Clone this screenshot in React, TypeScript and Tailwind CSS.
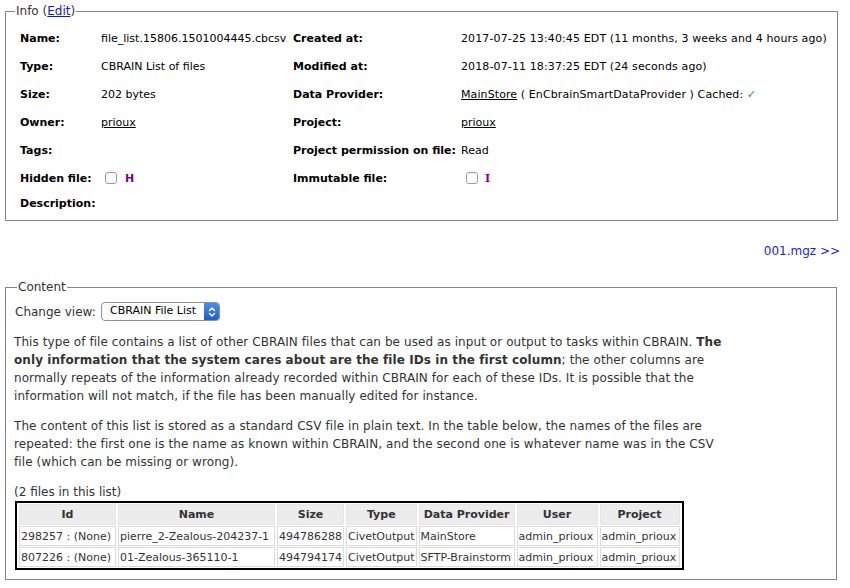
import React from "react";

const Check = () => (
  <span className="inline-block w-[12px] h-[12px] border border-[#9a9a9a] rounded-[3px] bg-white align-middle" />
);

function Row({ children }: { children: React.ReactNode }) {
  return <div className="contents">{children}</div>;
}

const Cell = ({ children, className = "" }: { children?: React.ReactNode; className?: string }) => (
  <div className={`flex items-center whitespace-nowrap ${className}`}>{children}</div>
);

export default function App() {
  const rows = [
    ["298257 : (None)", "pierre_2-Zealous-204237-1", "494786288", "CivetOutput", "MainStore", "admin_prioux", "admin_prioux"],
    ["807226 : (None)", "01-Zealous-365110-1", "494794174", "CivetOutput", "SFTP-Brainstorm", "admin_prioux", "admin_prioux"],
  ];
  const heads = ["Id", "Name", "Size", "Type", "Data Provider", "User", "Project"];
  const widths = ["w-[97px]", "w-[157px]", "w-[66px]", "w-[70px]", "w-[96px]", "w-[81px]", "w-[80px]"];

  return (
    <div className="w-[850px] h-[588px] overflow-hidden bg-white px-[5px] font-['DejaVu_Sans',sans-serif] text-black">
      {/* Info */}
      <fieldset className="mt-[4px] w-[833px] border border-[#858585] pl-[14px] pt-[6px] pb-[6px]">
        <legend className="ml-[-5px] px-[1px] text-[12px] leading-[14px] text-[#333]">
          Info (<span className="text-[#1515d0] underline">Edit</span>)
        </legend>
        <div className="grid grid-cols-[81px_192px_168px_1fr] text-[11px] leading-[13px]">
          <Row>
            <Cell className="h-[28px] font-bold">Name:</Cell>
            <Cell className="h-[28px]">file_list.15806.1501004445.cbcsv</Cell>
            <Cell className="h-[28px] font-bold">Created at:</Cell>
            <Cell className="h-[28px] tracking-[0.12px]">2017-07-25 13:40:45 EDT (11 months, 3 weeks and 4 hours ago)</Cell>
          </Row>
          <Row>
            <Cell className="h-[28px] font-bold">Type:</Cell>
            <Cell className="h-[28px]">CBRAIN List of files</Cell>
            <Cell className="h-[28px] font-bold">Modified at:</Cell>
            <Cell className="h-[28px] tracking-[0.12px]">2018-07-11 18:37:25 EDT (24 seconds ago)</Cell>
          </Row>
          <Row>
            <Cell className="h-[28px] font-bold">Size:</Cell>
            <Cell className="h-[28px]">202 bytes</Cell>
            <Cell className="h-[28px] font-bold">Data Provider:</Cell>
            <Cell className="h-[28px] tracking-[0.1px]">
              <span className="underline">MainStore</span>
              <span>&nbsp;( EnCbrainSmartDataProvider ) Cached:&nbsp;</span>
              <span className="text-[#2f9a2f]">✓</span>
            </Cell>
          </Row>
          <Row>
            <Cell className="h-[28px] font-bold">Owner:</Cell>
            <Cell className="h-[28px]"><span className="underline">prioux</span></Cell>
            <Cell className="h-[28px] font-bold">Project:</Cell>
            <Cell className="h-[28px]"><span className="underline">prioux</span></Cell>
          </Row>
          <Row>
            <Cell className="h-[28px] font-bold">Tags:</Cell>
            <Cell className="h-[28px]" />
            <Cell className="h-[28px] font-bold">Project permission on file:</Cell>
            <Cell className="h-[28px]">Read</Cell>
          </Row>
          <Row>
            <Cell className="h-[28px] font-bold">Hidden file:</Cell>
            <Cell className="h-[28px]">
              <span className="ml-[4px] flex"><Check /></span>
              <span className="ml-[8px] font-bold text-[#800080]">H</span>
            </Cell>
            <Cell className="h-[28px] font-bold">Immutable file:</Cell>
            <Cell className="h-[28px]">
              <span className="ml-[5px] flex"><Check /></span>
              <span className="ml-[7px] font-bold text-[#800080] font-['DejaVu_Serif',serif]">I</span>
            </Cell>
          </Row>
          <Row>
            <Cell className="h-[22px] font-bold">Description:</Cell>
            <Cell className="h-[22px]" />
            <Cell className="h-[22px]" />
            <Cell className="h-[22px]" />
          </Row>
        </div>
      </fieldset>

      {/* next link */}
      <div className="mt-[23px] pr-[5px] text-right text-[12px] leading-[14px] text-[#1a1af0]">001.mgz &gt;&gt;</div>

      {/* Content */}
      <fieldset className="mt-[22px] w-[832px] border border-[#858585] pl-[8px] pt-[8px] pb-[9px] text-[#333]">
        <legend className="ml-[3px] px-[1px] text-[12px] leading-[14px] text-[#333]">Content</legend>
        <div className="flex items-center h-[19px] text-[12px]">
          <span className="inline-block w-[87px] pl-[1px]">Change view:</span>
          <div className="flex h-[19px] w-[119px] items-stretch rounded-[4px] border border-[#8f8f8f] bg-white overflow-hidden">
            <div className="flex flex-1 items-center pl-[8px] text-[11px] text-black">CBRAIN File List</div>
            <div className="flex w-[15px] items-center justify-center bg-gradient-to-b from-[#4c8ee6] to-[#1a5ec9]">
              <svg width="8" height="12" viewBox="0 0 8 12" fill="none" stroke="white" strokeWidth="1.5" strokeLinecap="round" strokeLinejoin="round">
                <path d="M1.5 4.5 L4 2 L6.5 4.5" />
                <path d="M1.5 7.5 L4 10 L6.5 7.5" />
              </svg>
            </div>
          </div>
        </div>

        <p className="mt-[12px] text-[12px] leading-[18px] tracking-[0.08px] whitespace-nowrap">
          This type of file contains a list of other CBRAIN files that can be used as input or output to tasks within CBRAIN. <b>The</b>
          <br />
          <b>only information that the system cares about are the file IDs in the first column</b>; the other columns are
          <br />
          normally repeats of the information already recorded within CBRAIN for each of these IDs. It is possible that the
          <br />
          information will not match, if the file has been manually edited for instance.
        </p>
        <p className="mt-[12px] text-[12px] leading-[18px] tracking-[0.08px] whitespace-nowrap">
          The content of this list is stored as a standard CSV file in plain text. In the table below, the names of the files are
          <br />
          repeated: the first one is the name as known within CBRAIN, and the second one is whatever name was in the CSV
          <br />
          file (which can be missing or wrong).
        </p>
        <p className="mt-[12px] text-[12px] leading-[18px]">(2 files in this list)</p>

        <table className="ml-[1px] table-fixed border-separate border-spacing-x-[2px] border-spacing-y-[1px] border-[2px] border-black text-[11px] leading-[13px] text-[#333]">
          <thead>
            <tr>
              {heads.map((h, i) => (
                <th key={h} className={`${widths[i]} h-[21px] bg-[#ececec] border border-[#e6e6e6] p-0 text-center font-bold`}>
                  {h}
                </th>
              ))}
            </tr>
          </thead>
          <tbody>
            {rows.map((r, ri) => (
              <tr key={ri}>
                {r.map((c, ci) => (
                  <td key={ci} className="h-[20px] border border-[#dcdcdc] px-[1px] py-0 text-left whitespace-nowrap overflow-hidden">
                    {c}
                  </td>
                ))}
              </tr>
            ))}
          </tbody>
        </table>
      </fieldset>
    </div>
  );
}
